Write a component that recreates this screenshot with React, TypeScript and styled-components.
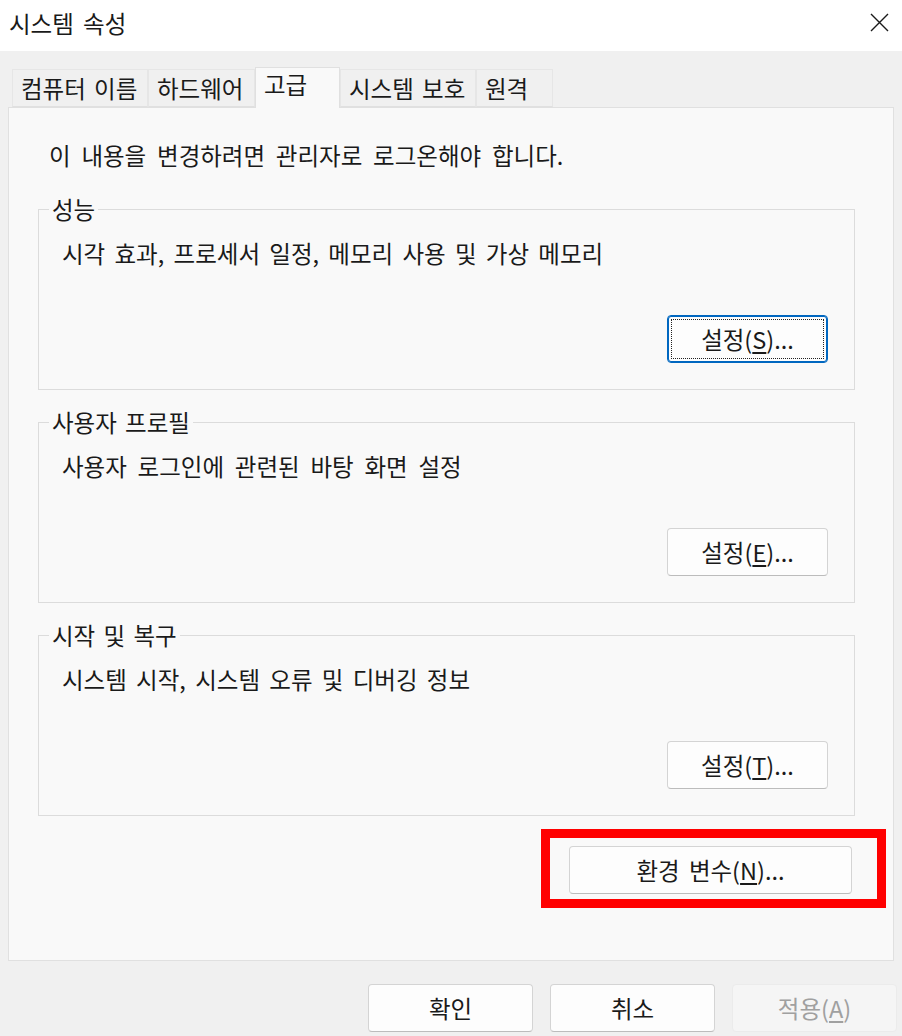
import React from "react";
import styled, { createGlobalStyle } from "styled-components";

const Global = createGlobalStyle`
  html, body { margin: 0; padding: 0; background: #f0f0f0; }
  body { font-family: "Noto Sans CJK KR", "Noto Sans", sans-serif; color: #1a1a1a; }
  * { box-sizing: border-box; }
`;

const FS = "23.5px";

const Window = styled.div`
  width: 902px;
  height: 1036px;
  display: flex;
  flex-direction: column;
  background: #f0f0f0;
  overflow: hidden;
`;

const TitleBar = styled.div`
  height: 51px;
  flex: none;
  background: #ffffff;
  display: flex;
  align-items: center;
  justify-content: space-between;
  padding: 0 13px 6px 9px;
`;

const Title = styled.div`
  font-size: ${FS};
  line-height: 24px;
  word-spacing: 4px;
  color: #1a1a1a;
`;

const CloseButton = styled.div`
  width: 19px;
  height: 19px;
  display: flex;
`;

const Body = styled.div`
  flex: 1;
  display: flex;
  flex-direction: column;
  padding: 16px 5px 4px 8px;
`;

const TabStrip = styled.div`
  height: 40px;
  flex: none;
  display: flex;
  align-items: flex-end;
  padding-left: 4px;
  margin-right: 3px;
  position: relative;
  z-index: 1;
`;

const Tab = styled.div<{ $w: number; $active?: boolean }>`
  width: ${(p) => p.$w}px;
  height: ${(p) => (p.$active ? 41 : 38)}px;
  margin-bottom: ${(p) => (p.$active ? -1 : 0)}px;
  background: ${(p) => (p.$active ? "#f9f9f9" : "#f0f0f0")};
  border: 1px solid ${(p) => (p.$active ? "#e0e0e0" : "#e6e6e6")};
  border-bottom: ${(p) => (p.$active ? "none" : "1px solid #e0e0e0")};
  font-size: ${FS};
  line-height: 24px;
  word-spacing: 3px;
  padding: ${(p) => (p.$active ? "4px 0 0 8px" : "6px 0 0 8px")};
  white-space: nowrap;
  color: #1a1a1a;
`;

const Panel = styled.div`
  flex: 1;
  margin-right: 3px;
  background: #f9f9f9;
  border: 1px solid #e0e0e0;
  display: flex;
  flex-direction: column;
  padding: 35px 38px 0 29px;
`;

const Notice = styled.div`
  font-size: ${FS};
  line-height: 24px;
  word-spacing: 5.5px;
  margin-left: 11px;
  margin-bottom: 30px;
  color: #1a1a1a;
`;

const Groups = styled.div`
  display: flex;
  flex-direction: column;
  gap: 20px;
`;

const Group = styled.fieldset`
  margin: 0;
  padding: 0 26px 26px 0;
  border: 1px solid #dcdcdc;
  min-inline-size: 0;
  display: flex;
  flex-direction: column;
`;

const Legend = styled.legend`
  margin-left: 10px;
  padding: 0 3px;
  font-size: ${FS};
  line-height: 24px;
  word-spacing: 3px;
  color: #1a1a1a;
`;

const Description = styled.div<{ $ws?: number }>`
  margin: 20px 0 0 23px;
  font-size: ${FS};
  line-height: 24px;
  word-spacing: ${(p) => p.$ws ?? 4}px;
  color: #1a1a1a;
`;

const ButtonRow = styled.div<{ $top?: number }>`
  display: flex;
  justify-content: flex-end;
  margin-top: ${(p) => p.$top ?? 0}px;
`;

const Button = styled.button<{ $w: number; $focused?: boolean }>`
  width: ${(p) => p.$w}px;
  height: 48px;
  border-radius: 4px;
  background: ${(p) => (p.disabled ? "#f5f5f5" : "#fdfdfd")};
  border: 1px solid ${(p) => (p.$focused ? "#0067c0" : p.disabled ? "#ebebeb" : "#d4d4d4")};
  border-bottom-color: ${(p) => (p.$focused ? "#0067c0" : p.disabled ? "#ebebeb" : "#bcbcbc")};
  box-shadow: ${(p) => (p.$focused ? "inset 0 0 0 1px #0067c0" : "none")};
  outline: ${(p) => (p.$focused ? "1px dotted #222" : "none")};
  outline-offset: -5px;
  font-family: "Noto Sans CJK KR", "Noto Sans", sans-serif;
  font-size: ${FS};
  line-height: 24px;
  word-spacing: 4px;
  color: ${(p) => (p.disabled ? "#a0a0a0" : "#1a1a1a")};
  padding: 0;
  display: flex;
  align-items: center;
  justify-content: center;
  cursor: default;
  u { text-underline-offset: 3px; }
`;

const EnvRow = styled.div`
  display: flex;
  justify-content: flex-end;
  margin-top: 30px;
  padding-right: 3px;
`;

const Highlight = styled.div`
  position: relative;
`;

const RedBox = styled.div`
  position: absolute;
  left: -28px;
  top: -17px;
  right: -34px;
  bottom: -14px;
  border: 9px solid #ff0000;
  pointer-events: none;
`;

const Footer = styled.div`
  flex: none;
  display: flex;
  justify-content: flex-end;
  gap: 17px;
  margin-top: 23px;
`;

const groups = [
  { title: "성능", desc: "시각 효과, 프로세서 일정, 메모리 사용 및 가상 메모리", key: "S", focused: true, ws: 4 },
  { title: "사용자 프로필", desc: "사용자 로그인에 관련된 바탕 화면 설정", key: "E", ws: 5.5 },
  { title: "시작 및 복구", desc: "시스템 시작, 시스템 오류 및 디버깅 정보", key: "T", ws: 4 },
];

const tabs = [
  { label: "컴퓨터 이름", w: 136 },
  { label: "하드웨어", w: 107 },
  { label: "고급", w: 85, active: true },
  { label: "시스템 보호", w: 136 },
  { label: "원격", w: 77 },
];

export default function App() {
  return (
    <Window>
      <Global />
      <TitleBar>
        <Title>시스템 속성</Title>
        <CloseButton>
          <svg width="19" height="19" viewBox="0 0 19 19">
            <path d="M1 1 L18 18 M18 1 L1 18" stroke="#1a1a1a" strokeWidth="1.4" fill="none" />
          </svg>
        </CloseButton>
      </TitleBar>
      <Body>
        <TabStrip>
          {tabs.map((t) => (
            <Tab key={t.label} $w={t.w} $active={t.active}>
              {t.label}
            </Tab>
          ))}
        </TabStrip>
        <Panel>
          <Notice>이 내용을 변경하려면 관리자로 로그온해야 합니다.</Notice>
          <Groups>
            {groups.map((g) => (
              <Group key={g.title}>
                <Legend>{g.title}</Legend>
                <Description $ws={g.ws}>{g.desc}</Description>
                <ButtonRow $top={50}>
                  <Button $w={161} $focused={g.focused}>
                    설정(<u>{g.key}</u>)...
                  </Button>
                </ButtonRow>
              </Group>
            ))}
          </Groups>
          <EnvRow>
            <Highlight>
              <Button $w={283}>
                환경 변수(<u>N</u>)...
              </Button>
              <RedBox />
            </Highlight>
          </EnvRow>
        </Panel>
        <Footer>
          <Button $w={165}>확인</Button>
          <Button $w={165}>취소</Button>
          <Button $w={165} disabled>
            적용(<u>A</u>)
          </Button>
        </Footer>
      </Body>
    </Window>
  );
}
